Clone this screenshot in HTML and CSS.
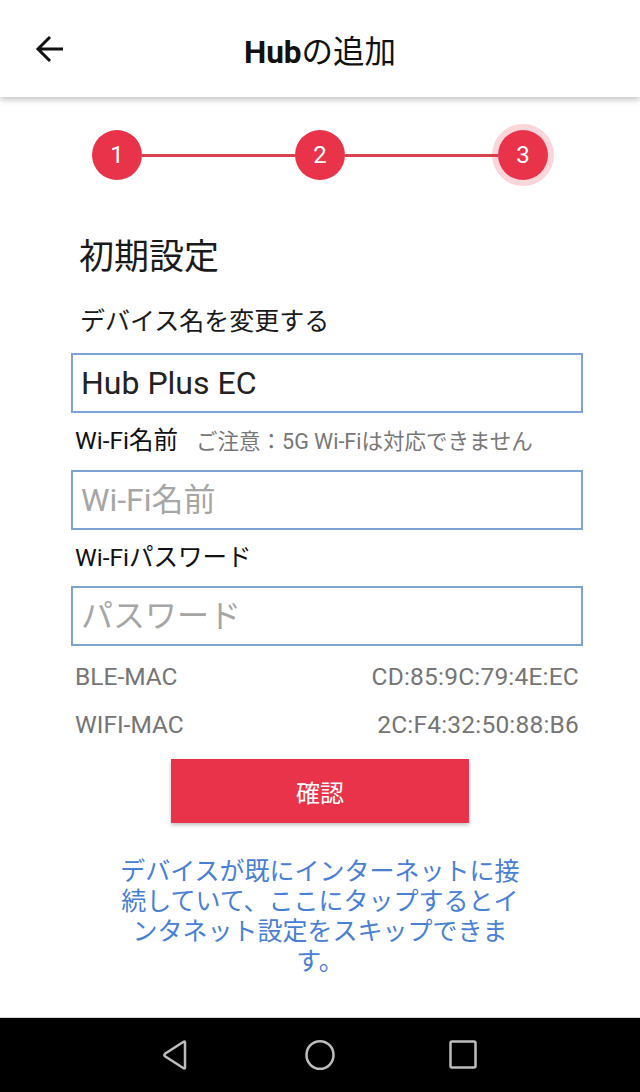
FILE: index.html
```html
<!DOCTYPE html>
<html lang="ja">
<head>
  <meta charset="UTF-8" />
  <meta name="viewport" content="width=device-width, initial-scale=1.0"/>
  <title>Hubの追加</title>
  <link rel="stylesheet" href="styles.css">
</head>
<body>

  <div class="topbar">
    <div class="back">
      <svg width="30" height="30" viewBox="0 0 30 30">
        <path d="M28 15H3M15 3L3 15L15 27" fill="none" stroke="#111" stroke-width="3"/>
      </svg>
    </div>
    <div class="title"><b>Hub</b>の追加</div>
    <div></div>
  </div>

  <div class="stepper">
    <div class="step">1</div>
    <div class="line"></div>
    <div class="step">2</div>
    <div class="line"></div>
    <div class="step current">3</div>
  </div>

  <div class="form">
    <h1 class="heading">初期設定</h1>
    <div class="rename">デバイス名を変更する</div>
    <div class="field filled">Hub Plus EC</div>

    <div class="label">Wi-Fi名前 <span class="note">ご注意：5G Wi-Fiは対応できません</span></div>
    <div class="field">Wi-Fi名前</div>

    <div class="label">Wi-Fiパスワード</div>
    <div class="field">パスワード</div>

    <div class="mac first"><span>BLE-MAC</span><span>CD:85:9C:79:4E:EC</span></div>
    <div class="mac"><span>WIFI-MAC</span><span>2C:F4:32:50:88:B6</span></div>
  </div>

  <div class="confirm">確認</div>

  <p class="skip">デバイスが既にインターネットに接続していて、ここにタップするとインタネット設定をスキップできます。</p>

  <div class="navbar">
    <svg width="30" height="32" viewBox="0 0 30 32">
      <path d="M23 3.5V28.5Q23 30 21.6 29.2L3 17.2Q1.8 16 3 14.8L21.6 2.8Q23 2 23 3.5Z" fill="none" stroke="#bdbdbd" stroke-width="2.5"/>
    </svg>
    <svg width="32" height="32" viewBox="0 0 32 32">
      <ellipse cx="16" cy="16" rx="13.5" ry="13.8" fill="none" stroke="#bdbdbd" stroke-width="2.5"/>
    </svg>
    <svg width="30" height="32" viewBox="0 0 30 32">
      <rect x="2.5" y="2.5" width="25" height="26" rx="1.5" fill="none" stroke="#bdbdbd" stroke-width="2.5"/>
    </svg>
  </div>

</body>
</html>
```

FILE: styles.css
```css
body {
  margin: 0;
  width: 640px;
  height: 1092px;
  background: #fff;
  font-family: Roboto, "Noto Sans CJK JP", sans-serif;
  color: #1a1a1a;
  overflow: hidden;
  display: flex;
  flex-direction: column;
}

.topbar {
  height: 97px;
  display: grid;
  grid-template-columns: 1fr auto 1fr;
  align-items: center;
  background: #fff;
  box-shadow: 0 3px 6px rgba(0, 0, 0, 0.22);
  position: relative;
  z-index: 2;
}

.back {
  padding-left: 35px;
  display: flex;
}

.title {
  font-size: 31.5px;
  font-weight: 400;
  color: #111;
}

.title b {
  font-weight: 700;
}

.stepper {
  display: flex;
  align-items: center;
  padding: 0 92px;
  margin-top: 33px;
}

.step {
  width: 50px;
  height: 50px;
  border-radius: 50%;
  background: #e8334a;
  color: #fff;
  font-size: 24px;
  display: flex;
  align-items: center;
  justify-content: center;
  flex-shrink: 0;
}

.step.current {
  box-shadow: 0 0 0 6px rgba(232, 51, 74, 0.2);
}

.line {
  flex: 1;
  height: 3px;
  background: #d9414f;
}

.form {
  margin: 0 57px 0 71px;
}

.heading {
  margin: 58px 0 0 8px;
  font-size: 35px;
  font-weight: 400;
  line-height: 40px;
}

.rename {
  margin: 28px 0 0 9px;
  font-size: 25px;
  line-height: 32px;
}

.field {
  height: 56px;
  border: 2px solid #7ea2d4;
  margin-top: 15px;
  padding-left: 8px;
  font-size: 32px;
  line-height: 56px;
  color: #a6a6a6;
}

.field.filled {
  color: #222;
}

.label {
  margin: 12px 0 0 4px;
  font-size: 24.5px;
  line-height: 31px;
  color: #111;
}

.label + .field {
  margin-top: 13px;
}

.note {
  margin-left: 12px;
  font-size: 21.5px;
  color: #777;
}

.mac {
  display: flex;
  justify-content: space-between;
  padding: 0 4px 0 4px;
  font-size: 24.5px;
  line-height: 32px;
  color: #757575;
  margin-top: 16px;
}

.mac span:last-child {
  letter-spacing: 0.2px;
}

.mac.first {
  margin-top: 15px;
}

.confirm {
  align-self: center;
  width: 298px;
  height: 64px;
  margin-top: 18px;
  background: #e8334a;
  color: #fff;
  font-size: 24px;
  display: flex;
  align-items: center;
  justify-content: center;
  box-shadow: 0 2px 4px rgba(0, 0, 0, 0.25);
}

.skip {
  align-self: center;
  width: 402px;
  margin: 34px 0 0;
  font-size: 25px;
  line-height: 30px;
  text-align: center;
  color: #4a80d4;
}

.navbar {
  margin-top: auto;
  height: 74px;
  background: #000;
  border-top: 1px solid #cfcfcf;
  display: flex;
  align-items: center;
  justify-content: center;
  gap: 112px;
}
```
